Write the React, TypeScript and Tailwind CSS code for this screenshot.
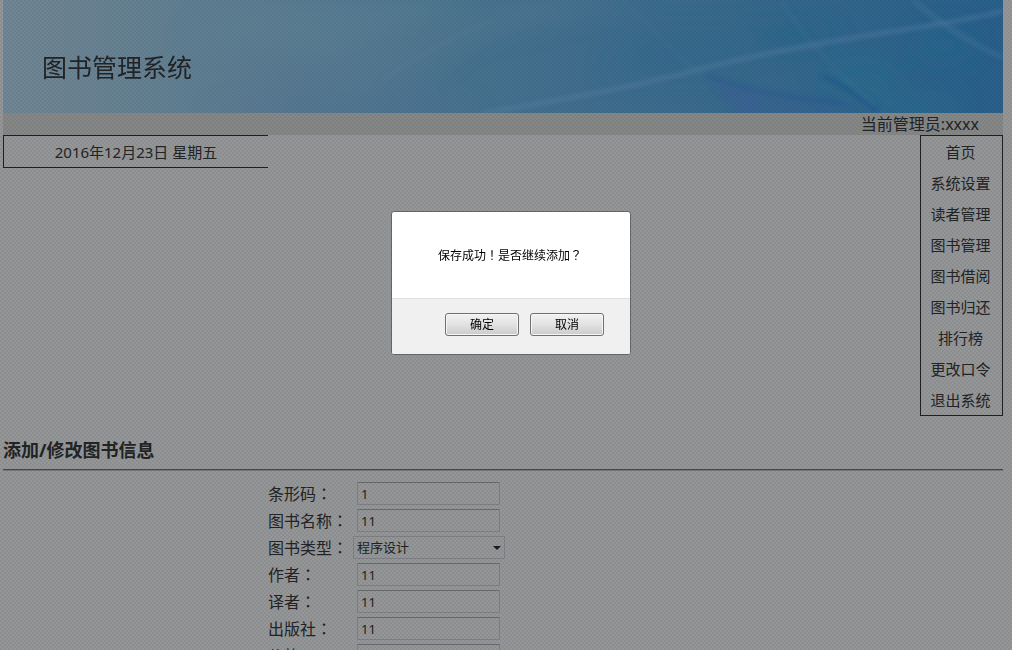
import type { ReactNode } from "react";

const menuItems = [
  "首页",
  "系统设置",
  "读者管理",
  "图书管理",
  "图书借阅",
  "图书归还",
  "排行榜",
  "更改口令",
  "退出系统",
];

const inputClass =
  "ml-1 h-[23px] w-[143px] rounded-[1px] border border-[#7f8187] border-t-[#696b6f] bg-transparent px-[3px] text-[13px] text-[#222]";

// full-width punctuation sits in the middle of its cell in the TC face
function Mark({ children }: { children: string }) {
  return <span className="font-['Noto_Sans_CJK_TC',sans-serif]">{children}</span>;
}

function Banner() {
  return (
    <header className="relative h-[113px] overflow-hidden bg-linear-to-r from-[#718795] via-[#45728f] to-[#29618c]">
      <svg
        className="absolute inset-0 h-full w-full"
        viewBox="0 0 1000 113"
        preserveAspectRatio="none"
        aria-hidden="true"
      >
        <defs>
          <filter id="soft" x="-10%" y="-10%" width="120%" height="120%">
            <feGaussianBlur stdDeviation="2" />
          </filter>
          <filter id="softer" x="-30%" y="-30%" width="160%" height="160%">
            <feGaussianBlur stdDeviation="12" />
          </filter>
        </defs>
        <g filter="url(#softer)">
          <path d="M240 0H480L330 60L180 40Z" fill="#5e8497" opacity="0.4" />
          <path d="M330 113L470 40L640 0H520L300 80Z" fill="#5c7d96" opacity="0.4" />
          <path d="M200 113H480L400 80Z" fill="#4e7496" opacity="0.5" />
          <path d="M640 30H760L720 75H600Z" fill="#2f678f" opacity="0.5" />
          <ellipse cx="860" cy="80" rx="40" ry="16" fill="#25708f" opacity="0.5" />
          <ellipse cx="940" cy="45" rx="30" ry="16" fill="#24688f" opacity="0.5" />
          <ellipse cx="790" cy="35" rx="40" ry="12" fill="#24658a" opacity="0.5" />
          <ellipse cx="910" cy="108" rx="50" ry="8" fill="#2a7494" opacity="0.5" />
        </g>
        <g filter="url(#soft)" fill="none">
          <path d="M702 75L730 113H860L838 100L760 91Z" fill="#3a6094" opacity="0.3" />
          <path d="M715 82L740 113H752L760 92Z" fill="#43609a" opacity="0.3" />
          <path d="M480 113Q620 90 690 71T880 33T1000 10" stroke="#5e86ab" strokeWidth="4" opacity="0.45" />
          <path d="M910 0Q950 35 1000 58" stroke="#5580a5" strokeWidth="5" opacity="0.3" />
          <path d="M778 0Q808 50 870 104" stroke="#4b7d9f" strokeWidth="4" opacity="0.2" />
          <path d="M820 76Q850 90 874 112" stroke="#1f5290" strokeWidth="4" opacity="0.6" />
          <path d="M702 75Q760 96 840 103" stroke="#24588f" strokeWidth="3" opacity="0.5" />
          <path d="M620 0L680 60L702 75" stroke="#4f7a9e" strokeWidth="4" opacity="0.2" />
          <path d="M380 80Q430 45 490 20" stroke="#648a9e" strokeWidth="3" opacity="0.2" />
          <path d="M440 90Q480 50 540 30" stroke="#3f7194" strokeWidth="4" opacity="0.2" />
        </g>
      </svg>
      <h1 className="relative px-[39px] pt-[49px] text-[25px] leading-9">图书管理系统</h1>
    </header>
  );
}

function Field({ id, label, children }: { id: string; label: string; children: ReactNode }) {
  return (
    <div className="flex h-[27px] items-center">
      <label htmlFor={id} className="w-[85px] shrink-0 text-base leading-6">
        {label}
        <Mark>：</Mark>
      </label>
      {children}
    </div>
  );
}

function TextField({ id, label, value }: { id: string; label: string; value: string }) {
  return (
    <Field id={id} label={label}>
      <input id={id} type="text" defaultValue={value} className={inputClass} />
    </Field>
  );
}

function BookForm() {
  return (
    <form className="mt-[10px] ml-[265px]">
      <TextField id="barcode" label="条形码" value="1" />
      <TextField id="name" label="图书名称" value="11" />
      <Field id="type" label="图书类型">
        <div className="relative">
          <select
            id="type"
            className="block h-[23px] w-[152px] appearance-none rounded-[1px] border border-[#7f8187] bg-transparent px-[3px] text-[13px] text-[#222]"
          >
            <option>程序设计</option>
          </select>
          <svg className="pointer-events-none absolute top-[10px] right-1 h-1 w-2" viewBox="0 0 8 4" aria-hidden="true">
            <path d="M0 0H8L4 4Z" fill="#1b1d1f" />
          </svg>
        </div>
      </Field>
      <TextField id="author" label="作者" value="11" />
      <TextField id="translator" label="译者" value="11" />
      <TextField id="publisher" label="出版社" value="11" />
      <TextField id="price" label="价格" value="11" />
    </form>
  );
}

function ConfirmDialog() {
  const buttonClass =
    "h-[23px] w-[74px] rounded-[3px] border border-[#707070] bg-linear-to-b from-[#f2f2f2] via-[#e2e2e2] to-[#cbcbcb] text-xs text-black shadow-[inset_0_0_0_1px_#f6f6f6]";

  return (
    <div className="fixed inset-0 flex items-start justify-center pt-[211px] pl-[10px]">
      <div
        role="dialog"
        aria-modal="true"
        aria-labelledby="confirm-text"
        className="w-[240px] overflow-hidden rounded-[3px] border border-[#646566] bg-white"
      >
        <p id="confirm-text" className="px-[46px] pt-[34px] pb-[33px] text-xs leading-[18px] whitespace-nowrap text-black">
          保存成功<Mark>！</Mark>是否继续添加<Mark>？</Mark>
        </p>
        <div className="flex justify-end gap-[11px] border-t border-[#dfdfdf] bg-[#f0f0f0] pt-[14px] pr-[26px] pb-[18px]">
          <button type="button" className={buttonClass}>
            确定
          </button>
          <button type="button" className={buttonClass}>
            取消
          </button>
        </div>
      </div>
    </div>
  );
}

export default function App() {
  return (
    <div className="h-screen overflow-hidden bg-[#959697] font-['Noto_Sans','Noto_Sans_CJK_SC',sans-serif] text-[#222426]">
      <div className="mr-[9px] ml-[3px]">
        <Banner />
        <div className="h-[22px] bg-[#868787] pr-6 text-right text-base leading-[22px]">当前管理员:xxxx</div>
        <div className="flex items-start justify-between">
          <div className="h-[33px] w-[265px] border border-r-0 border-[#1e2022] text-center text-[15px] leading-[33px]">
            2016年12月23日 星期五
          </div>
          <nav className="w-[83px] border border-[#1e2022] pr-0.5 text-center text-[15px]">
            {menuItems.map((item) => (
              <a key={item} href="#" className="block h-[31px] leading-[33px]">
                {item}
              </a>
            ))}
          </nav>
        </div>
        <h2 className="mt-5 border-b border-[#46484a] pb-[5px] text-lg leading-7 font-bold shadow-[0_1px_0_#77797b]">
          添加/修改图书信息
        </h2>
        <BookForm />
      </div>

      {/* dotted mask over the page */}
      <div className="pointer-events-none fixed inset-0 bg-[radial-gradient(circle_at_1px_1px,#0000000e_1px,transparent_1px),radial-gradient(circle_at_3px_3px,#0000000e_1px,transparent_1px)] bg-size-[4px_4px]" />
      <ConfirmDialog />
    </div>
  );
}
